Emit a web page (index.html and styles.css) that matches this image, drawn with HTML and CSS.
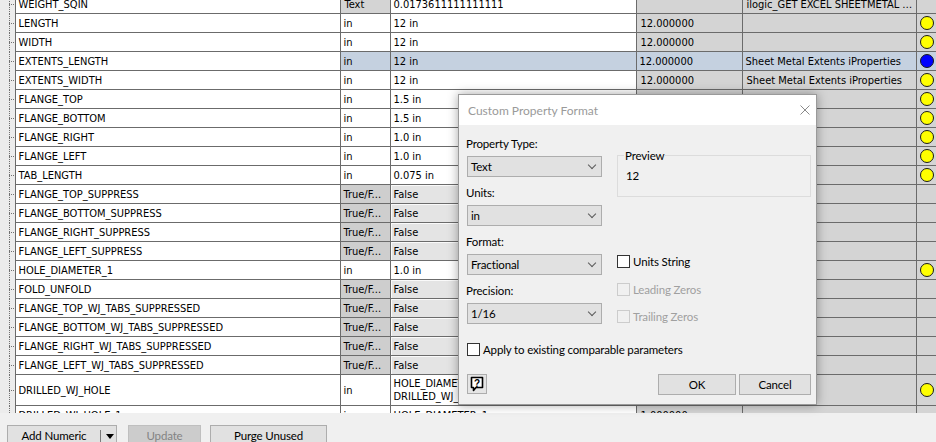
FILE: index.html
```html
<!DOCTYPE html>
<html lang="en">
<head>
    <meta charset="UTF-8">
    <title>Parameters</title>
    <link rel="stylesheet" href="styles.css">
</head>
<body>
    <div class="window">
        <div class="params">
            <table class="grid">
                <colgroup>
                    <col class="c-tree"><col class="c-name"><col class="c-unit"><col class="c-eq"><col class="c-nom"><col class="c-com"><col class="c-stat">
                </colgroup>
                <tbody>
                    <tr><td class="tree"></td><td>WEIGHT_SQIN</td><td class="grey">Text</td><td>0.0173611111111111</td><td class="grey"></td><td class="grey">ilogic_GET EXCEL SHEETMETAL INFORMATION</td><td class="stat"></td></tr>
                    <tr><td class="tree"></td><td>LENGTH</td><td>in</td><td>12 in</td><td class="grey">12.000000</td><td class="grey"></td><td class="stat"><span class="dot"></span></td></tr>
                    <tr><td class="tree"></td><td>WIDTH</td><td>in</td><td>12 in</td><td class="grey">12.000000</td><td class="grey"></td><td class="stat"><span class="dot"></span></td></tr>
                    <tr class="selected"><td class="tree"></td><td>EXTENTS_LENGTH</td><td>in</td><td>12 in</td><td>12.000000</td><td>Sheet Metal Extents iProperties</td><td class="stat"><span class="dot blue"></span></td></tr>
                    <tr><td class="tree"></td><td>EXTENTS_WIDTH</td><td>in</td><td>12 in</td><td class="grey">12.000000</td><td class="grey">Sheet Metal Extents iProperties</td><td class="stat"><span class="dot"></span></td></tr>
                    <tr><td class="tree"></td><td>FLANGE_TOP</td><td>in</td><td>1.5 in</td><td class="grey">1.500000</td><td class="grey"></td><td class="stat"><span class="dot"></span></td></tr>
                    <tr><td class="tree"></td><td>FLANGE_BOTTOM</td><td>in</td><td>1.5 in</td><td class="grey">1.500000</td><td class="grey"></td><td class="stat"><span class="dot"></span></td></tr>
                    <tr><td class="tree"></td><td>FLANGE_RIGHT</td><td>in</td><td>1.0 in</td><td class="grey">1.000000</td><td class="grey"></td><td class="stat"><span class="dot"></span></td></tr>
                    <tr><td class="tree"></td><td>FLANGE_LEFT</td><td>in</td><td>1.0 in</td><td class="grey">1.000000</td><td class="grey"></td><td class="stat"><span class="dot"></span></td></tr>
                    <tr><td class="tree"></td><td>TAB_LENGTH</td><td>in</td><td>0.075 in</td><td class="grey">0.075000</td><td class="grey"></td><td class="stat"><span class="dot"></span></td></tr>
                    <tr><td class="tree"></td><td>FLANGE_TOP_SUPPRESS</td><td class="bool">True/F...</td><td class="pick">False</td><td class="grey"></td><td class="grey"></td><td class="stat"></td></tr>
                    <tr><td class="tree"></td><td>FLANGE_BOTTOM_SUPPRESS</td><td class="bool">True/F...</td><td class="pick">False</td><td class="grey"></td><td class="grey"></td><td class="stat"></td></tr>
                    <tr><td class="tree"></td><td>FLANGE_RIGHT_SUPPRESS</td><td class="bool">True/F...</td><td class="pick">False</td><td class="grey"></td><td class="grey"></td><td class="stat"></td></tr>
                    <tr><td class="tree"></td><td>FLANGE_LEFT_SUPPRESS</td><td class="bool">True/F...</td><td class="pick">False</td><td class="grey"></td><td class="grey"></td><td class="stat"></td></tr>
                    <tr><td class="tree"></td><td>HOLE_DIAMETER_1</td><td>in</td><td>1.0 in</td><td class="grey">1.000000</td><td class="grey"></td><td class="stat"><span class="dot"></span></td></tr>
                    <tr><td class="tree"></td><td>FOLD_UNFOLD</td><td class="bool">True/F...</td><td class="pick">False</td><td class="grey"></td><td class="grey"></td><td class="stat"></td></tr>
                    <tr><td class="tree"></td><td>FLANGE_TOP_WJ_TABS_SUPPRESSED</td><td class="bool">True/F...</td><td class="pick">False</td><td class="grey"></td><td class="grey"></td><td class="stat"></td></tr>
                    <tr><td class="tree"></td><td>FLANGE_BOTTOM_WJ_TABS_SUPPRESSED</td><td class="bool">True/F...</td><td class="pick">False</td><td class="grey"></td><td class="grey"></td><td class="stat"></td></tr>
                    <tr><td class="tree"></td><td>FLANGE_RIGHT_WJ_TABS_SUPPRESSED</td><td class="bool">True/F...</td><td class="pick">False</td><td class="grey"></td><td class="grey"></td><td class="stat"></td></tr>
                    <tr><td class="tree"></td><td>FLANGE_LEFT_WJ_TABS_SUPPRESSED</td><td class="bool">True/F...</td><td class="pick">False</td><td class="grey"></td><td class="grey"></td><td class="stat"></td></tr>
                    <tr class="tall"><td class="tree"></td><td>DRILLED_WJ_HOLE</td><td>in</td><td class="two">HOLE_DIAMETER_1 +<br>DRILLED_WJ_HOLE_OFFSET</td><td class="grey">1.125000</td><td class="grey"></td><td class="stat"><span class="dot"></span></td></tr>
                    <tr><td class="tree"></td><td>DRILLED_WJ_HOLE_1</td><td>in</td><td>HOLE_DIAMETER_1</td><td class="grey">1.000000</td><td class="grey"></td><td class="stat"></td></tr>
                </tbody>
            </table>
        </div>

        <div class="toolbar">
            <div class="btn split">
                <span class="split-main">Add Numeric</span>
                <span class="split-arrow"></span>
            </div>
            <div class="btn disabled update">Update</div>
            <div class="btn purge">Purge Unused</div>
        </div>

        <div class="dialog">
            <div class="dlg-title">
                <span>Custom Property Format</span>
                <svg class="close" width="10" height="10" viewBox="0 0 10 10">
                    <path d="M0.5 0.5 L9.5 9.5 M9.5 0.5 L0.5 9.5" stroke="#8a8a8a" stroke-width="1" fill="none"/>
                </svg>
            </div>
            <div class="dlg-body">
                <div class="dlg-cols">
                    <div class="col-left">
                        <div class="lbl first">Property Type:</div>
                        <div class="combo">Text<span class="chev"></span></div>
                        <div class="lbl">Units:</div>
                        <div class="combo">in<span class="chev"></span></div>
                        <div class="lbl">Format:</div>
                        <div class="combo">Fractional<span class="chev"></span></div>
                        <div class="lbl">Precision:</div>
                        <div class="combo">1/16<span class="chev"></span></div>
                    </div>
                    <div class="col-right">
                        <div class="preview">
                            <span class="preview-title">Preview</span>
                            <div class="preview-value">12</div>
                        </div>
                        <div class="check units-string"><span class="box"></span>Units String</div>
                        <div class="check off"><span class="box"></span>Leading Zeros</div>
                        <div class="check off trailing"><span class="box"></span>Trailing Zeros</div>
                    </div>
                </div>
                <div class="check apply"><span class="box"></span>Apply to existing comparable parameters</div>
                <div class="dlg-buttons">
                    <div class="btn help">
                        <svg width="16" height="16" viewBox="0 0 16 16">
                            <path d="M2.5 1.5 H13.5 V11.5 H7 L4.5 14.5 V11.5 H2.5 Z" fill="#fff" stroke="#000" stroke-width="1.6" stroke-linejoin="round"/>
                            <text x="8" y="10.5" text-anchor="middle" font-family="Liberation Sans, sans-serif" font-weight="bold" font-size="10">?</text>
                        </svg>
                    </div>
                    <div class="spacer"></div>
                    <div class="btn ok">OK</div>
                    <div class="btn cancel">Cancel</div>
                </div>
            </div>
        </div>
    </div>
</body>
</html>
```

FILE: styles.css
```css
body {
    margin: 0;
    background-color: #f0f0f0;
    font-family: Lato, "Noto Sans", sans-serif;
    font-size: 11.5px;
    letter-spacing: -0.15px;
    color: #000;
}

.window {
    position: relative;
    width: 936px;
    height: 442px;
    overflow: hidden;
    display: flex;
    flex-direction: column;
}

/* parameter grid */

.params {
    flex-shrink: 0;
    height: 413px;
    overflow: hidden;
    background-color: #ededed;
}

.grid {
    width: 938px;
    margin-top: -6px;
    table-layout: fixed;
    border-collapse: collapse;
    font-family: "DejaVu Sans Condensed", "DejaVu Sans", sans-serif;
    font-stretch: condensed;
    font-size: 11px;
    letter-spacing: 0;
}

.c-tree { width: 15px; }
.c-name { width: 325px; }
.c-unit { width: 50px; }
.c-eq { width: 246px; }
.c-nom { width: 106px; }
.c-com { width: 174px; }
.c-stat { width: 22px; }

.grid tr {
    height: 19px;
}

.grid tr.tall {
    height: 31px;
}

.grid td {
    border: 1px solid #6b6b6b;
    padding: 0 3px;
    background-color: #fff;
    white-space: nowrap;
    overflow: hidden;
    text-overflow: ellipsis;
    line-height: 13px;
}

.grid td.tree {
    border: none;
    border-right: 1px solid #6b6b6b;
    padding: 0;
    background-color: #ececec;
    background-image:
        repeating-linear-gradient(to bottom, #707070 0 1px, transparent 1px 2px),
        repeating-linear-gradient(to right, #707070 0 1px, transparent 1px 2px);
    background-size: 1px 100%, 6px 1px;
    background-position: 9px 0, 9px center;
    background-repeat: no-repeat;
}

.grid td.grey {
    background-color: #d4d4d4;
    padding-left: 4px;
}

.grid td.bool {
    background-color: #cecece;
}

.grid td.pick {
    background-color: #e4e4e4;
    box-shadow: inset 1px 0 0 #fafafa, inset 0 1px 0 #fafafa;
}

.grid tr.selected td {
    background-color: #c5d1e0;
}

.grid tr.selected td.tree {
    background-color: #ececec;
}

.grid tr.selected td:nth-child(2) {
    background-color: #fff;
}

.grid td.stat {
    background-color: #d4d4d4;
    padding: 0 0 0 3px;
}

.dot {
    display: block;
    width: 12px;
    height: 12px;
    border: 1px solid #1a1a1a;
    border-radius: 50%;
    background-color: #ffff00;
}

.dot.blue {
    background-color: #0000ff;
}

/* bottom toolbar */

.toolbar {
    flex: 1;
    display: flex;
    align-items: flex-start;
    padding: 12px 0 0 7px;
    gap: 11px;
}

.btn {
    box-sizing: border-box;
    height: 22px;
    border: 1px solid #adadad;
    background-color: #e1e1e1;
    display: flex;
    align-items: center;
    justify-content: center;
    line-height: 16px;
}

.split {
    width: 110px;
    justify-content: flex-start;
}

.split-main {
    width: 92px;
    text-align: center;
    border-right: 1px solid #7a7a7a;
    line-height: 12px;
}

.split-arrow {
    margin-left: 5px;
    width: 0;
    height: 0;
    border-left: 4px solid transparent;
    border-right: 4px solid transparent;
    border-top: 5px solid #000;
}

.update {
    width: 73px;
}

.disabled {
    background-color: #cccccc;
    border-color: #bfbfbf;
    color: #838383;
}

.purge {
    width: 117px;
    margin-left: -2px;
}

/* dialog */

.dialog {
    position: absolute;
    left: 458px;
    top: 94px;
    width: 359px;
    height: 311px;
    box-sizing: border-box;
    border: 1px solid #9a9a9a;
    background-color: #f0f0f0;
    box-shadow: 0 0 10px rgba(0, 0, 0, 0.35);
}

.dlg-title {
    height: 30px;
    background-color: #fff;
    display: flex;
    align-items: center;
    justify-content: space-between;
    padding: 0 6px 0 9px;
    color: #9a9a9a;
    font-size: 12px;
    letter-spacing: 0;
}

.dlg-body {
    padding: 11px 0 0 7px;
}

.dlg-cols {
    display: flex;
    gap: 14px;
}

.col-left {
    width: 137px;
}

.lbl {
    line-height: 16px;
    margin: 8px 0 4px;
}

.lbl.first {
    margin-top: 0;
}

.combo {
    box-sizing: border-box;
    margin-left: 1px;
    width: 135px;
    height: 21px;
    border: 1px solid #adadad;
    background-color: #e1e1e1;
    display: flex;
    align-items: center;
    justify-content: space-between;
    padding: 0 6px 0 3px;
}

.chev {
    width: 5px;
    height: 5px;
    border-right: 1px solid #5a5a5a;
    border-bottom: 1px solid #5a5a5a;
    transform: rotate(45deg);
    margin-top: -4px;
}

.col-right {
    width: 194px;
}

.preview {
    box-sizing: border-box;
    margin-top: 19px;
    height: 42px;
    border: 1px solid #dcdcdc;
    padding: 0 8px;
}

.preview-title {
    display: block;
    width: fit-content;
    margin: -8px 0 0 -2px;
    padding: 0 1px;
    background-color: #f0f0f0;
    line-height: 16px;
}

.preview-value {
    margin-top: 4px;
    line-height: 16px;
}

.check {
    display: flex;
    align-items: center;
    gap: 3px;
    height: 13px;
    line-height: 13px;
}

.check .box {
    box-sizing: border-box;
    width: 13px;
    height: 13px;
    border: 1px solid #333;
    background-color: #fff;
}

.check.off {
    color: #a0a0a0;
    margin-top: 15px;
}

.check.off .box {
    border-color: #cccccc;
    background-color: #f0f0f0;
}

.check.off.trailing {
    margin-top: 14px;
}

.units-string {
    margin-top: 58px;
}

.apply {
    margin: 19px 0 0 1px;
}

.dlg-buttons {
    display: flex;
    margin-top: 18px;
    padding-right: 5px;
}

.help {
    margin-left: 1px;
    width: 20px;
    height: 20px;
    background-color: #e5e5e5;
}

.spacer {
    flex: 1;
}

.ok {
    width: 78px;
    height: 21px;
}

.cancel {
    width: 72px;
    height: 21px;
    margin-left: 3px;
}
```
